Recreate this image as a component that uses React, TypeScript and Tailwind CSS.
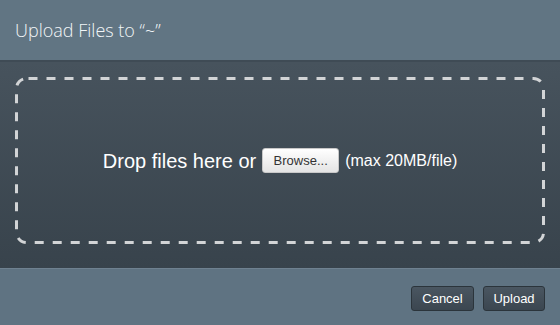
export default function App() {
  return (
    <div className="w-[560px] h-[325px] flex flex-col overflow-hidden" style={{ fontFamily: '"Liberation Sans", Arial, sans-serif' }}>
      <div className="h-[62px] shrink-0 bg-[#617583] border-b-2 border-[#3f4b55] flex items-center pl-[15px]">
        <span className="text-[18px] text-[#f2f6f8] font-light leading-none" style={{ fontFamily: '"Open Sans", sans-serif' }}>
          Upload Files to “~”
        </span>
      </div>
      <div className="h-[207px] shrink-0 bg-gradient-to-b from-[#47535d] to-[#38434c] pt-[15px] px-[15px] border-b border-[#6f8190]">
        <div className="relative h-[167px] flex items-center justify-center gap-[6px] text-white">
          <svg className="absolute inset-0 pointer-events-none" width="530" height="167" viewBox="0 0 530 167">
            <rect x="1.5" y="1.5" width="527" height="164" rx="10" ry="10" fill="none" stroke="#d2d4d6" strokeWidth="3" strokeDasharray="9 9" strokeDashoffset="-2" />
          </svg>
          <span className="text-[20px]">Drop files here or</span>
          <button className="h-[25px] w-[77px] rounded-[3px] bg-gradient-to-b from-white to-[#e4e4e4] border border-[#c8c8c8] text-[13px] text-[#333]">Browse...</button>
          <span className="text-[16px]">(max 20MB/file)</span>
        </div>
      </div>
      <div className="flex-1 bg-[#5f7382] flex items-center justify-end gap-[9px] pr-[15px] pt-[3px]">
        <button className="h-[25px] w-[63px] rounded-[3px] bg-gradient-to-b from-[#4a5661] to-[#3b4650] border border-[#2b343b] text-[13px] text-white">Cancel</button>
        <button className="h-[25px] w-[62px] rounded-[3px] bg-gradient-to-b from-[#4a5661] to-[#3b4650] border border-[#2b343b] text-[13px] text-white">Upload</button>
      </div>
    </div>
  );
}
